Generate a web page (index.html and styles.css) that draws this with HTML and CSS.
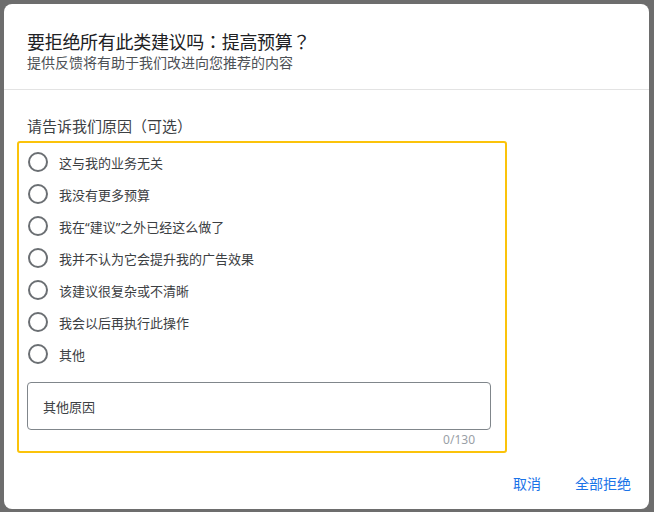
FILE: index.html
```html
<!DOCTYPE html>
<html lang="zh-CN">
<head>
<meta charset="utf-8">
<link rel="stylesheet" href="styles.css">
</head>
<body>
<div class="dialog">
  <div class="header">
    <div class="title">要拒绝所有此类建议吗<span class="punct" lang="zh-TW">：</span>提高预算<span class="punct" lang="zh-TW">？</span></div>
    <div class="subtitle">提供反馈将有助于我们改进向您推荐的内容</div>
  </div>
  <div class="body">
    <div class="label">请告诉我们原因<span class="paren">（</span>可选<span class="paren">）</span></div>
    <div class="box">
      <div class="option"><span class="radio"></span><span>这与我的业务无关</span></div>
      <div class="option"><span class="radio"></span><span>我没有更多预算</span></div>
      <div class="option"><span class="radio"></span><span>我在“建议”之外已经这么做了</span></div>
      <div class="option"><span class="radio"></span><span>我并不认为它会提升我的广告效果</span></div>
      <div class="option"><span class="radio"></span><span>该建议很复杂或不清晰</span></div>
      <div class="option"><span class="radio"></span><span>我会以后再执行此操作</span></div>
      <div class="option"><span class="radio"></span><span>其他</span></div>
      <div class="field"><span class="placeholder">其他原因</span></div>
      <div class="counter">0/130</div>
    </div>
  </div>
  <div class="footer">
    <span class="btn">取消</span>
    <span class="btn">全部拒绝</span>
  </div>
</div>
</body>
</html>
```
FILE: styles.css
```css
html, body {
  margin: 0;
  padding: 0;
}
body {
  width: 654px;
  height: 512px;
  overflow: hidden;
  background: #6d6d6d;
  font-family: "Noto Sans", "Noto Sans CJK SC", sans-serif;
}
.dialog {
  margin: 4px 0 0 4px;
  width: 645px;
  height: 505px;
  background: #fff;
  border-radius: 8px;
  box-sizing: border-box;
}
.header {
  padding: 26px 23px 18px;
  border-bottom: 1px solid #e3e3e3;
}
.title {
  font-size: 18px;
  line-height: 22px;
  color: #202124;
  font-family: "Noto Sans CJK SC", sans-serif;
  letter-spacing: -0.3px;
}
.punct {
  font-family: "Noto Sans CJK TC", sans-serif;
}
.subtitle {
  margin-top: 3px;
  font-size: 14px;
  line-height: 16px;
  color: #4d5156;
}
.body {
  padding: 26px 0 0 13px;
}
.label {
  padding-left: 10px;
  font-size: 15px;
  line-height: 20px;
  color: #3c4043;
  font-family: "Noto Sans CJK SC", sans-serif;
}
.paren {
  display: inline-block;
  width: 15px;
  text-align: center;
}
.box {
  margin-top: 5px;
  width: 490px;
  box-sizing: border-box;
  border: 2px solid #fbc30a;
  border-radius: 3px;
  padding: 3px 14px 3px 8px;
  display: flex;
  flex-direction: column;
}
.option {
  height: 32px;
  display: flex;
  align-items: center;
  gap: 11px;
  font-size: 13px;
  color: #3c4043;
}
.radio {
  width: 16px;
  height: 16px;
  border: 2px solid #6b6f73;
  border-radius: 50%;
  flex: none;
  margin-left: 1px;
}
.field {
  margin-top: 12px;
  height: 48px;
  box-sizing: border-box;
  border: 1px solid #80868b;
  border-radius: 4px;
  display: flex;
  align-items: center;
  padding-left: 15px;
}
.placeholder {
  font-size: 13px;
  color: #3c4043;
}
.counter {
  margin-top: 2px;
  align-self: flex-end;
  margin-right: 16px;
  font-size: 12px;
  line-height: 16px;
  color: #9aa0a6;
}
.footer {
  margin-top: 21px;
  display: flex;
  justify-content: flex-end;
  gap: 18px;
  padding-right: 10px;
}
.btn {
  padding: 0 8px;
  font-size: 14px;
  line-height: 20px;
  color: #1a73e8;
}
```
